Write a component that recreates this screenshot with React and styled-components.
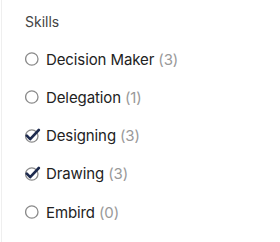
import React from "react";
import styled, { createGlobalStyle } from "styled-components";

const Global = createGlobalStyle`
  html, body { margin: 0; padding: 0; background: #fff; }
  body { font-family: "Inter", "Noto Sans", sans-serif; }
`;

const Panel = styled.div`
  margin-left: 1px;
  border-left: 1px solid #efefef;
  height: 242px;
  box-sizing: border-box;
  padding: 13px 0 0 23px;
`;

const Title = styled.div`
  font-size: 14px;
  line-height: 18px;
  color: #444;
  margin-bottom: 19px;
`;

const List = styled.ul`
  list-style: none;
  margin: 0;
  padding: 0;
  display: flex;
  flex-direction: column;
  gap: 20.25px;
`;

const Row = styled.li`
  display: flex;
  align-items: center;
  height: 18px;
  gap: 5px;
  font-size: 15px;
  letter-spacing: -0.1px;
  color: #222;
`;

const Count = styled.span`
  color: #999;
  margin-left: 4px;
`;

const Icon = styled.svg`
  width: 16px;
  height: 16px;
  flex: none;
`;

function Mark({ checked }) {
  return (
    <Icon viewBox="0 0 16 16">
      <circle cx="6.8" cy="8" r="6.2" fill="none" stroke="#8a8a8a" strokeWidth="1.3" />
      {checked && (
        <path d="M1.8 7.6 L5.2 11.2 L13.8 2" fill="none" stroke="#1d2a4e" strokeWidth="2.6" strokeLinecap="round" strokeLinejoin="round" />
      )}
    </Icon>
  );
}

const items = [
  { label: "Decision Maker", count: 3, checked: false },
  { label: "Delegation", count: 1, checked: false },
  { label: "Designing", count: 3, checked: true },
  { label: "Drawing", count: 3, checked: true },
  { label: "Embird", count: 0, checked: false },
];

export default function App() {
  return (
    <>
      <Global />
      <Panel>
        <Title>Skills</Title>
        <List>
          {items.map((it) => (
            <Row key={it.label}>
              <Mark checked={it.checked} />
              <span>
                {it.label}
                <Count>({it.count})</Count>
              </span>
            </Row>
          ))}
        </List>
      </Panel>
    </>
  );
}
